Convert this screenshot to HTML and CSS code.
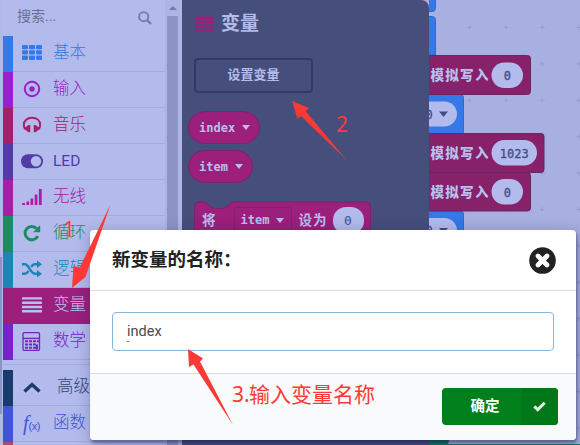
FILE: index.html
```html
<!DOCTYPE html>
<html lang="zh-CN">
<head>
<meta charset="utf-8">
<title>变量</title>
<link rel="stylesheet" href="styles.css">
</head>
<body>
<div class="editor">
  <div class="gutter"><span class="gutter-thumb"></span></div>
  <nav class="toolbox">
    <div class="search"><span>搜索...</span>
      <svg width="14" height="14" viewBox="0 0 14 14" fill="none" stroke="#757ca8" stroke-width="1.9"><circle cx="5.7" cy="5.7" r="4.6"/><path d="M9.2 9.2L13 13" stroke-width="2.3"/></svg>
    </div>
    <div class="row basic"><svg class="icon" viewBox="0 0 22 22" fill="currentColor"><rect x="1" y="3" width="6" height="4.3" rx="1"/><rect x="8" y="3" width="6" height="4.3" rx="1"/><rect x="15" y="3" width="6" height="4.3" rx="1"/><rect x="1" y="8.3" width="6" height="4.3" rx="1"/><rect x="8" y="8.3" width="6" height="4.3" rx="1"/><rect x="15" y="8.3" width="6" height="4.3" rx="1"/><rect x="1" y="13.6" width="6" height="4.3" rx="1"/><rect x="8" y="13.6" width="6" height="4.3" rx="1"/><rect x="15" y="13.6" width="6" height="4.3" rx="1"/></svg><span>基本</span></div>
    <div class="row input"><svg class="icon" viewBox="0 0 22 22"><circle cx="11" cy="11" r="7.2" fill="none" stroke="currentColor" stroke-width="2"/><circle cx="11" cy="11" r="2.7" fill="currentColor"/></svg><span>输入</span></div>
    <div class="row music"><svg class="icon" viewBox="0 0 22 22"><path d="M4.500 15C3 13.500 2.800 12 2.800 11C2.800 6.500 6.300 3.800 11 3.800S19.200 6.500 19.200 11C19.200 12 19 13.500 17.500 15" fill="none" stroke="currentColor" stroke-width="2"/><path d="M9.300 11V18.200H7.500L3.800 15.500V13.800L7.500 11ZM12.700 11V18.200H14.500L18.200 15.500V13.800L14.500 11Z" fill="currentColor"/></svg><span>音乐</span></div>
    <div class="row led"><svg class="icon" viewBox="0 0 22 22"><rect x="0" y="4.2" width="22" height="14" rx="7" fill="currentColor"/><circle cx="15" cy="11.2" r="5.2" fill="#b3bbec"/></svg><span>LED</span></div>
    <div class="row radio"><svg class="icon" viewBox="0 0 22 22" fill="currentColor"><path d="M1.2 17h2.8v2H1.2zM5.4 15.5h2.7V19H5.4zM9.5 12.5h2.7V19H9.5zM13.7 8.5h2.7V19h-2.7zM17.9 3h2.8v16h-2.8z"/></svg><span>无线</span></div>
    <div class="row loops"><svg class="icon" viewBox="0 0 22 22"><path d="M16.8 14.1A6.7 6.7 0 1 1 15.7 6.6" fill="none" stroke="currentColor" stroke-width="3"/><path d="M19.2 3V10.2H12Z" fill="currentColor"/></svg><span>循环</span></div>
    <div class="row logic"><svg class="icon" viewBox="0 0 22 22"><path d="M1 6.3H4C8 6.3 9.5 15.7 14 15.7H17M1 15.7H4C5.6 15.7 6.7 14.3 7.6 12.8M10.2 9C11.2 7.3 12.3 6.3 14 6.3H17" fill="none" stroke="currentColor" stroke-width="2.4"/><path d="M16 2.6L21 6.3L16 10ZM16 12L21 15.7L16 19.4Z" fill="currentColor"/></svg><span>逻辑</span></div>
    <div class="row vars"><svg class="icon" viewBox="0 0 22 22" fill="currentColor"><path d="M1 3.2h20v2.4H1zM1 7.5h20v2.4H1zM1 11.8h20v2.4H1zM1 16.1h20v2.4H1z"/></svg><span>变量</span></div>
    <div class="row math"><svg class="icon" viewBox="0 0 22 22" fill="none" stroke="currentColor"><rect x="2" y="2.7" width="16.5" height="17.6" rx="1" stroke-width="1.3"/><path d="M2 8.4h16.5" stroke-width="1.4"/><path d="M4 11.2h3M8 11.2h3M12 11.2h3M16 11.2h2M4 14.5h3M8 14.5h3M12 14.5h3M4 17.8h3M8 17.8h3M12 17.8h3M16 14.5v5" stroke-width="2.1"/></svg><span>数学</span></div>
    <div class="divider"></div>
    <div class="row advanced"><svg class="icon" viewBox="0 0 22 22"><path d="M3.5 15.5L11 8.5L18.5 15.5" fill="none" stroke="currentColor" stroke-width="3.4"/></svg><span>高级</span></div>
    <div class="row functions"><em class="icon fx">f<small>(x)</small></em><span>函数</span></div>
    <div class="row arrays"></div>
  </nav>
  <div class="scroll"><span class="scroll-up"></span><span class="scroll-thumb"></span></div>
  <section class="flyout">
    <header class="flyout-title"><svg width="19" height="16" viewBox="0 0 19 16" stroke="#9b1f7b" stroke-width="2.5" stroke-linecap="round"><path d="M1.2 1.7h16.6M1.2 5.8h16.6M1.2 10h16.6M1.2 14.2h16.6"/></svg><span>变量</span></header>
    <div class="make">设置变量</div>
    <div class="pill">index<i class="caret"></i></div>
    <div class="pill second">item<i class="caret"></i></div>
    <div class="set-block">
      <svg class="set-shape" width="178" height="52" viewBox="0 0 178 52"><path d="M.5 52V5Q.5 1 4.500 1H9Q12 1 14 3L17 6Q18.500 7.500 21 7.500H28Q31 7.500 32.500 6L35.500 3Q37.500 1 40 1H173Q176.500 1 176.500 5V52Z" fill="#9b1f7b" stroke="#7e2269"/></svg>
      <span class="set-label">将</span><span class="set-field">item<i class="caret"></i></span><span class="set-label">设为</span><span class="zero">0</span>
    </div>
  </section>
  <main class="workspace">
    <svg width="151" height="445" viewBox="429 0 151 445">
      <defs><pattern id="grid" x="451.300" y="9.300" width="36.400" height="36.400" patternUnits="userSpaceOnUse"><path d="M15.700 18.200h5M18.200 15.700v5" stroke="#959ed0" stroke-width="1"/></pattern></defs>
      <rect x="464" width="116" height="445" fill="url(#grid)"/>
      <g fill="#3479e7" stroke="#3169ce"><path d="M420-5H435.500V8Q435.500 11.500 432 11.500H420ZM420 16.500H432Q435.500 16.500 435.500 20V55H420Z"/><rect x="410" y="94.500" width="53.500" height="40" rx="3"/><rect x="410" y="211" width="53.500" height="40" rx="3"/></g>
      <g fill="#86216a" stroke="#6d2561"><rect x="410" y="55.500" width="120.500" height="39" rx="3"/><rect x="410" y="133.500" width="134" height="39" rx="3"/><rect x="410" y="172.500" width="120.500" height="38.500" rx="3"/></g>
      <g fill="#b3bbec"><rect x="491.500" y="62.500" width="31.500" height="25.500" rx="12.700"/><rect x="491.500" y="140" width="45.500" height="25.500" rx="12.700"/><rect x="491.500" y="179" width="31.500" height="25.500" rx="12.700"/><rect x="400" y="101.500" width="57" height="25" rx="12.500"/><rect x="400" y="218" width="57" height="25" rx="12.500"/></g>
      <g class="block-cn"><text x="430.500" y="79.500">模拟写入</text><text x="430.500" y="157.500">模拟写入</text><text x="430.500" y="196.500">模拟写入</text></g>
      <g class="block-num"><text x="507.300" y="79.500">0</text><text x="514.300" y="157.500">1023</text><text x="507.300" y="196.500">0</text><text x="429" y="118.500">0</text><text x="429" y="235">0</text></g>
      <path d="M439 111.500H448L443.500 117ZM439 228H448L443.500 233.500Z" fill="#434d87"/>
      <path d="M429 438h21l-2 6h132v3H429Z" fill="#16775b"/>
    </svg>
  </main>
</div>

<div class="dialog">
  <header class="dialog-head"><h1>新变量的名称：</h1>
    <svg width="27" height="27" viewBox="0 0 27 27"><circle cx="13.500" cy="13.500" r="13.300" fill="#222"/><path d="M9 9L18 18M18 9L9 18" stroke="#fff" stroke-width="4.700" stroke-linecap="round"/></svg>
  </header>
  <div class="dialog-body"><div class="field">index<i class="mark"></i></div></div>
  <footer class="dialog-foot"><div class="ok"><span>确定</span><b><svg width="13" height="11" viewBox="0 0 13 11"><path d="M1.300 5.300L4.700 8.600L11.700 1.700" fill="none" stroke="#e2f0e4" stroke-width="3"/></svg></b></div></footer>
</div>

<svg class="notes" width="580" height="445" viewBox="0 0 580 445">
  <g fill="#fb3a37"><path d="M110.500 204.500L85.500 277L72 288L73.500 265.500L79.500 268Z"/><path d="M292 101L309 108L305.500 111L347 160.500L301 116L297.500 119Z"/><path d="M188 349L203 358.500L200 361.500L233 425L193.500 364.500L189 367Z"/></g>
  <g class="note"><text x="63" y="237">1</text><text x="336" y="131.500">2</text><text x="232" y="402">3.<tspan x="249">输入变量名称</tspan></text></g>
</svg>
</body>
</html>
```
FILE: styles.css
```css
* { box-sizing: border-box; }
body {
  margin: 0;
  width: 580px;
  height: 445px;
  overflow: hidden;
  position: relative;
  font-family: Roboto, "Noto Sans CJK SC", sans-serif;
}
.editor { display: flex; height: 445px; background: #a7b0e0; }

.gutter { width: 3px; background: #b0b8e8; padding-top: 257px; }
.gutter-thumb { display: block; width: 2px; height: 157px; background: #8b94c6; }

.toolbox { width: 162px; background: #b3bbec; overflow: hidden; }
.search {
  height: 36px;
  display: flex;
  justify-content: space-between;
  padding: 6px 13px 0 14px;
  font-size: 14px;
  line-height: 20px;
  color: #686e94;
}
.search svg { margin-top: 5px; }
.row {
  height: 36px;
  display: flex;
  align-items: center;
  border-left: 10px solid currentColor;
  padding-left: 8px;
  font-size: 16.5px;
  font-weight: 300;
  box-shadow: inset 0 -1px #a2abdc;
}
.row span { margin-left: 10px; line-height: 34px; height: 36px; }
.icon { width: 22px; height: 22px; flex: none; margin-top: -3px; }
.basic { color: #3479e7; }
.input { color: #9b20cd; }
.music { color: #a5206a; }
.led { color: #533aa8; }
.led span { font-weight: 400; font-size: 15.5px; }
.radio { color: #a520a6; }
.loops { color: #1c8b61; }
.logic { color: #1b86b6; }
.math { color: #7822cc; }
.vars { color: #b8bfef; background: #9b1f7b; border-color: #9b1f7b; box-shadow: none; }
.divider { height: 10px; border-bottom: 0; background: linear-gradient(#a2abdc, #a2abdc) 0 4px / 100% 1px no-repeat; }
.advanced { color: #1b3a6c; }
.advanced span { margin-left: 14px; color: #344579; }
.functions { color: #4055d5; }
.fx { font: italic 20px/22px "Liberation Serif", serif; padding-left: 2px; white-space: nowrap; }
.fx small { font: 11px "Liberation Sans", sans-serif; letter-spacing: -.5px; }
.arrays { color: #ad4a69; }

.scroll { width: 17px; background: #adb5e4; padding: 6px 2px 0; border-right: 2px solid #b0b8e7; }
.scroll-up { display: block; width: 0; margin: 0 auto 6px; border: 4px solid transparent; border-top: 0; border-bottom-color: #737ba9; }
.scroll-thumb { display: block; height: 440px; background: #8d95c6; }

.flyout { width: 247px; background: #464e7c; border-radius: 0 8px 0 0; padding: 13px 0 0 12px; overflow: hidden; }
.flyout-title { display: flex; height: 21px; align-items: center; gap: 7px; color: #b3bbec; font-size: 19px; line-height: 21px; font-weight: 700; padding-left: 1px; }
.make {
  width: 119px;
  height: 35px;
  margin: 24px 0 18px 0;
  border: 2px solid #303968;
  border-radius: 4px;
  text-align: center;
  color: #b3bbec;
  font-size: 13px;
  font-weight: 600;
  line-height: 30px;
}
.pill {
  width: 72px;
  height: 33px;
  margin-left: -6px;
  border-radius: 17px;
  background: #9b1f7b;
  border: 1px solid #7e2269;
  display: flex;
  align-items: center;
  padding-left: 10px;
  font: 700 12px "DejaVu Sans Mono", monospace;
  color: #b8bfee;
}
.pill.second { width: 65px; margin-top: 6px; }
.caret { width: 0; border: 4px solid transparent; border-bottom: 0; border-top: 5px solid #b8bfee; margin-left: 7px; }
.set-block { position: relative; height: 52px; width: 178px; margin-top: 18px; padding: 6px 0 0 8px; display: flex; color: #b8bfee; font: 700 12px "DejaVu Sans Mono", "Noto Sans CJK SC", monospace; }
.set-shape { position: absolute; left: 0; top: 0; }
.set-label, .set-field, .zero { position: relative; line-height: 27px; letter-spacing: 1px; height: 27px; font-size: 13.500px; }
.set-field { display: flex; align-items: center; border: 1px solid #7e2269; border-radius: 3px; width: 58px; margin: 0 7px 0 17px; padding-left: 6px; font-size: 12px; letter-spacing: 0; }
.zero { background: #b3bbec; color: #434d87; font-size: 13px; font-weight: 400; border-radius: 13px; width: 31px; text-align: center; margin-left: 5px; letter-spacing: 0; }

.workspace { width: 151px; background: #a7b0e0; }
.workspace svg { display: block; }
.block-cn { font: 900 13.500px "Noto Sans CJK SC", sans-serif; letter-spacing: 1.300px; fill: #b8bfee; }
.block-num { font: 12px "DejaVu Sans Mono", monospace; fill: #434d87; stroke: #434d87; stroke-width: .3px; text-anchor: middle; }

.dialog {
  position: absolute;
  left: 90px;
  top: 230px;
  width: 486px;
  height: 210px;
  border-radius: 4px;
  background: #fff;
  box-shadow: 1px 3px 3px rgba(20, 25, 70, .4), 1px 3px 15px 2px rgba(20, 25, 70, .22);
  overflow: hidden;
}
.dialog-head { height: 61px; border-bottom: 1px solid #dadbdc; padding: 0 20px 0 22px; display: flex; align-items: center; justify-content: space-between; }
.dialog-head h1 { margin: 0; font-size: 18.500px; line-height: 60px; font-weight: 700; color: #222; }
.dialog-body { height: 83px; border-bottom: 1px solid #d5dadd; padding: 21px 22px; }
.field { position: relative; height: 39px; border: 1px solid #85b7d9; border-radius: 4px; padding-left: 14px; font-size: 14.500px; line-height: 37px; color: #4b4b4b; }
.mark { position: absolute; left: 14px; top: 28px; width: 2px; height: 1px; background: #777; }
.dialog-foot { height: 66px; background: #f9fafb; padding: 14px 18px 0; display: flex; justify-content: flex-end; }
.ok { display: flex; width: 116px; height: 37px; border-radius: 4px; overflow: hidden; background: #007f1b; color: #fff; font-size: 14.500px; font-weight: 700; line-height: 37px; }
.ok span { width: 79px; padding-left: 7px; text-align: center; }
.ok b { width: 37px; background: #00781a; display: flex; align-items: center; justify-content: center; }

.notes { position: absolute; left: 0; top: 0; }
.note { font: 21px "Noto Sans", "Noto Sans CJK SC", sans-serif; fill: #fb3a37; }
```
